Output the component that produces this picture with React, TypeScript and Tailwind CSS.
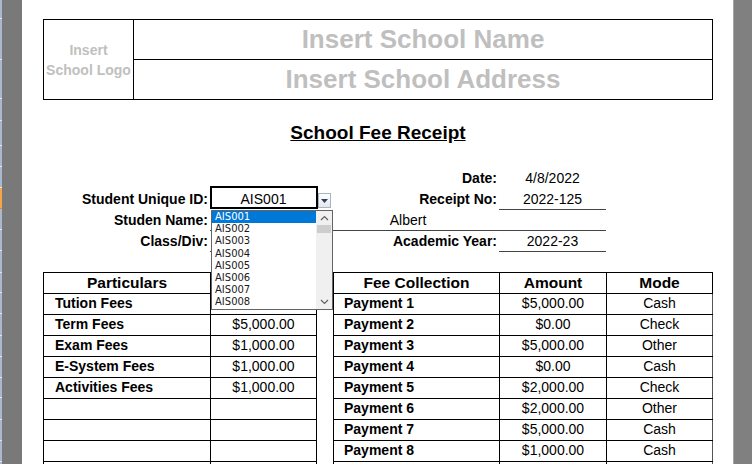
import React from 'react'

// ── Data ──────────────────────────────────────────────────────────────────────
const rulerRows = [19, 41, 39, 22, 25, 21, 21, 21, 21, 21, 22, 20, 21, 22, 21, 21, 20, 22, 21, 21, 21]

// first amount sits under the open id list, so it's left blank here
const fees = [
  { name: 'Tution Fees', amount: '' },
  { name: 'Term Fees', amount: '$5,000.00' },
  { name: 'Exam Fees', amount: '$1,000.00' },
  { name: 'E-System Fees', amount: '$1,000.00' },
  { name: 'Activities Fees', amount: '$1,000.00' },
  { name: '', amount: '' },
  { name: '', amount: '' },
  { name: '', amount: '' },
  { name: '', amount: '' },
  { name: '', amount: '' },
]

const payments = [
  { name: 'Payment 1', amount: '$5,000.00', mode: 'Cash' },
  { name: 'Payment 2', amount: '$0.00', mode: 'Check' },
  { name: 'Payment 3', amount: '$5,000.00', mode: 'Other' },
  { name: 'Payment 4', amount: '$0.00', mode: 'Cash' },
  { name: 'Payment 5', amount: '$2,000.00', mode: 'Check' },
  { name: 'Payment 6', amount: '$2,000.00', mode: 'Other' },
  { name: 'Payment 7', amount: '$5,000.00', mode: 'Cash' },
  { name: 'Payment 8', amount: '$1,000.00', mode: 'Cash' },
  { name: '', amount: '', mode: '' },
  { name: '', amount: '', mode: '' },
]

const ids = ['AIS001', 'AIS002', 'AIS003', 'AIS004', 'AIS005', 'AIS006', 'AIS007', 'AIS008']

// ── Pieces ────────────────────────────────────────────────────────────────────
const Chevron = ({ up }: { up?: boolean }) => (
  <svg width="9" height="6" viewBox="0 0 9 6">
    <path
      d={up ? 'M1 5 L4.5 1.5 L8 5' : 'M1 1 L4.5 4.5 L8 1'}
      fill="none"
      stroke="#606060"
      strokeWidth="1.2"
    />
  </svg>
)

const IdDropdown = () => (
  <>
    {/* the little validation arrow button */}
    <div className="absolute left-[108px] top-[4px] w-[13px] h-[15px] border border-[#a9b3c2] bg-gradient-to-b from-white to-[#e4e7ec] flex items-center justify-center">
      <svg width="7" height="4" viewBox="0 0 7 4">
        <path d="M0 0 H7 L3.5 4 Z" fill="#2c3f5f" />
      </svg>
    </div>

    {/* open list */}
    <div className="absolute left-px top-[21px] z-10 w-[122px] h-[100px] border border-[#646464] bg-white flex text-left">
      <div className="flex-1 flex flex-col font-['DejaVu_Sans',Tahoma,sans-serif] text-[10px] leading-[12.2px]">
        {ids.map((id, i) => (
          <div
            key={id}
            className={
              i === 0
                ? 'h-[12.2px] pl-[3px] bg-[#0078d7] text-white'
                : 'h-[12.2px] pl-[3px] text-[#1a1a1a]'
            }
          >
            {id}
          </div>
        ))}
      </div>
      <div className="w-[16px] bg-[#f0f0f0] flex flex-col items-center">
        <div className="h-[14px] flex items-center justify-center">
          <Chevron up />
        </div>
        <div className="w-[14px] h-[8px] bg-[#cdcdcd]" />
        <div className="flex-1" />
        <div className="h-[14px] flex items-center justify-center">
          <Chevron />
        </div>
      </div>
    </div>
  </>
)

// ── App ───────────────────────────────────────────────────────────────────────
const App = () => {
  return (
    <div className="w-[752px] h-[464px] flex overflow-hidden font-['Liberation_Sans',Arial,sans-serif] text-black">
      {/* left ruler strip */}
      <div className="w-[22px] shrink-0 bg-[#797979] flex">
        <div className="w-[2px] flex flex-col">
          {rulerRows.map((h, i) => (
            <div
              key={i}
              className={
                i === 7
                  ? 'bg-[#f6a54a] border-b border-[#e08a2a] shrink-0'
                  : 'bg-[#a9b8cb] border-b border-[#e3e8ef] shrink-0'
              }
              style={{ height: h }}
            />
          ))}
        </div>
      </div>

      {/* page */}
      <div className="w-[711px] shrink-0 bg-white pl-[21px] pt-[19px] flex flex-col">
        {/* school header box */}
        <div className="w-[670px] h-[81px] border border-black flex">
          <div className="w-[90px] border-r border-black flex items-center justify-center text-center text-[14px] leading-[20px] font-bold text-[#c0c0c0]">
            Insert
            <br />
            School Logo
          </div>
          <div className="flex-1 flex flex-col">
            <div className="h-[41px] border-b border-black flex items-center justify-center text-[26px] font-bold text-[#bfbfbf]">
              Insert School Name
            </div>
            <div className="flex-1 flex items-center justify-center text-[26px] font-bold text-[#bfbfbf]">
              Insert School Address
            </div>
          </div>
        </div>

        {/* title */}
        <div className="w-[670px] mt-[22px] h-[21px] text-center text-[19px] leading-[21px] font-bold underline">
          School Fee Receipt
        </div>

        {/* student info */}
        <div className="mt-[25px] grid grid-cols-[167px_107px_16px_166px_107px] text-[14px]">
          {/* row 1 */}
          <div className="h-[21px]" />
          <div className="h-[21px]" />
          <div className="h-[21px]" />
          <div className="h-[21px] leading-[21px] text-right pr-[2px] font-bold">Date:</div>
          <div className="h-[21px] leading-[21px] text-center">4/8/2022</div>

          {/* row 2 */}
          <div className="h-[21px] leading-[21px] text-right pr-[2px] font-bold">Student Unique ID:</div>
          <div className="h-[21px] leading-[21px] text-center relative">
            AIS001
            <div className="absolute -top-[3px] left-0 -right-px bottom-px border-2 border-black" />
            <IdDropdown />
          </div>
          <div className="h-[21px]" />
          <div className="h-[21px] leading-[21px] text-right pr-[2px] font-bold">Receipt No:</div>
          <div className="h-[21px] leading-[20px] text-center border-b border-[#444]">2022-125</div>

          {/* row 3 */}
          <div className="h-[21px] leading-[21px] text-right pr-[2px] font-bold">Studen Name:</div>
          <div className="col-span-4 h-[21px] leading-[20px] text-center border-b border-[#444]">Albert</div>

          {/* row 4 */}
          <div className="h-[21px] leading-[21px] text-right pr-[2px] font-bold">Class/Div:</div>
          <div className="h-[21px] border-b border-[#444]" />
          <div className="h-[21px]" />
          <div className="h-[21px] leading-[21px] text-right pr-[2px] font-bold">Academic Year:</div>
          <div className="h-[21px] leading-[20px] text-center border-b border-[#444]">2022-23</div>
        </div>

        {/* tables */}
        <div className="mt-[20px] flex gap-[16px] items-start">
          {/* particulars */}
          <div className="border-l border-t border-black text-[14px]">
            <div className="flex h-[21px] border-b border-black font-bold text-[15.5px] leading-[20px]">
              <div className="w-[167px] border-r border-black text-center">Particulars</div>
              <div className="w-[106px] border-r border-black" />
            </div>
            {fees.map((f, i) => (
              <div key={i} className="flex h-[21px] border-b border-black leading-[19px]">
                <div className="w-[167px] border-r border-black pl-[11px] font-bold">{f.name}</div>
                <div className="w-[106px] border-r border-black text-center">{f.amount}</div>
              </div>
            ))}
          </div>

          {/* fee collection */}
          <div className="border-l border-t border-black text-[14px]">
            <div className="flex h-[21px] border-b border-black font-bold text-[15.5px] leading-[20px]">
              <div className="w-[166px] border-r border-black text-center">Fee Collection</div>
              <div className="w-[107px] border-r border-black text-center">Amount</div>
              <div className="w-[106px] border-r border-black text-center">Mode</div>
            </div>
            {payments.map((p, i) => (
              <div key={i} className="flex h-[21px] border-b border-black leading-[19px]">
                <div className="w-[166px] border-r border-black pl-[10px] font-bold">{p.name}</div>
                <div className="w-[107px] border-r border-black text-center">{p.amount}</div>
                <div className="w-[106px] border-r border-[#555] text-center">{p.mode}</div>
              </div>
            ))}
          </div>
        </div>
      </div>

      {/* right gutter */}
      <div className="w-[19px] shrink-0 bg-[#808080] border-l border-[#a6a6a6]" />
    </div>
  )
}

export default App
